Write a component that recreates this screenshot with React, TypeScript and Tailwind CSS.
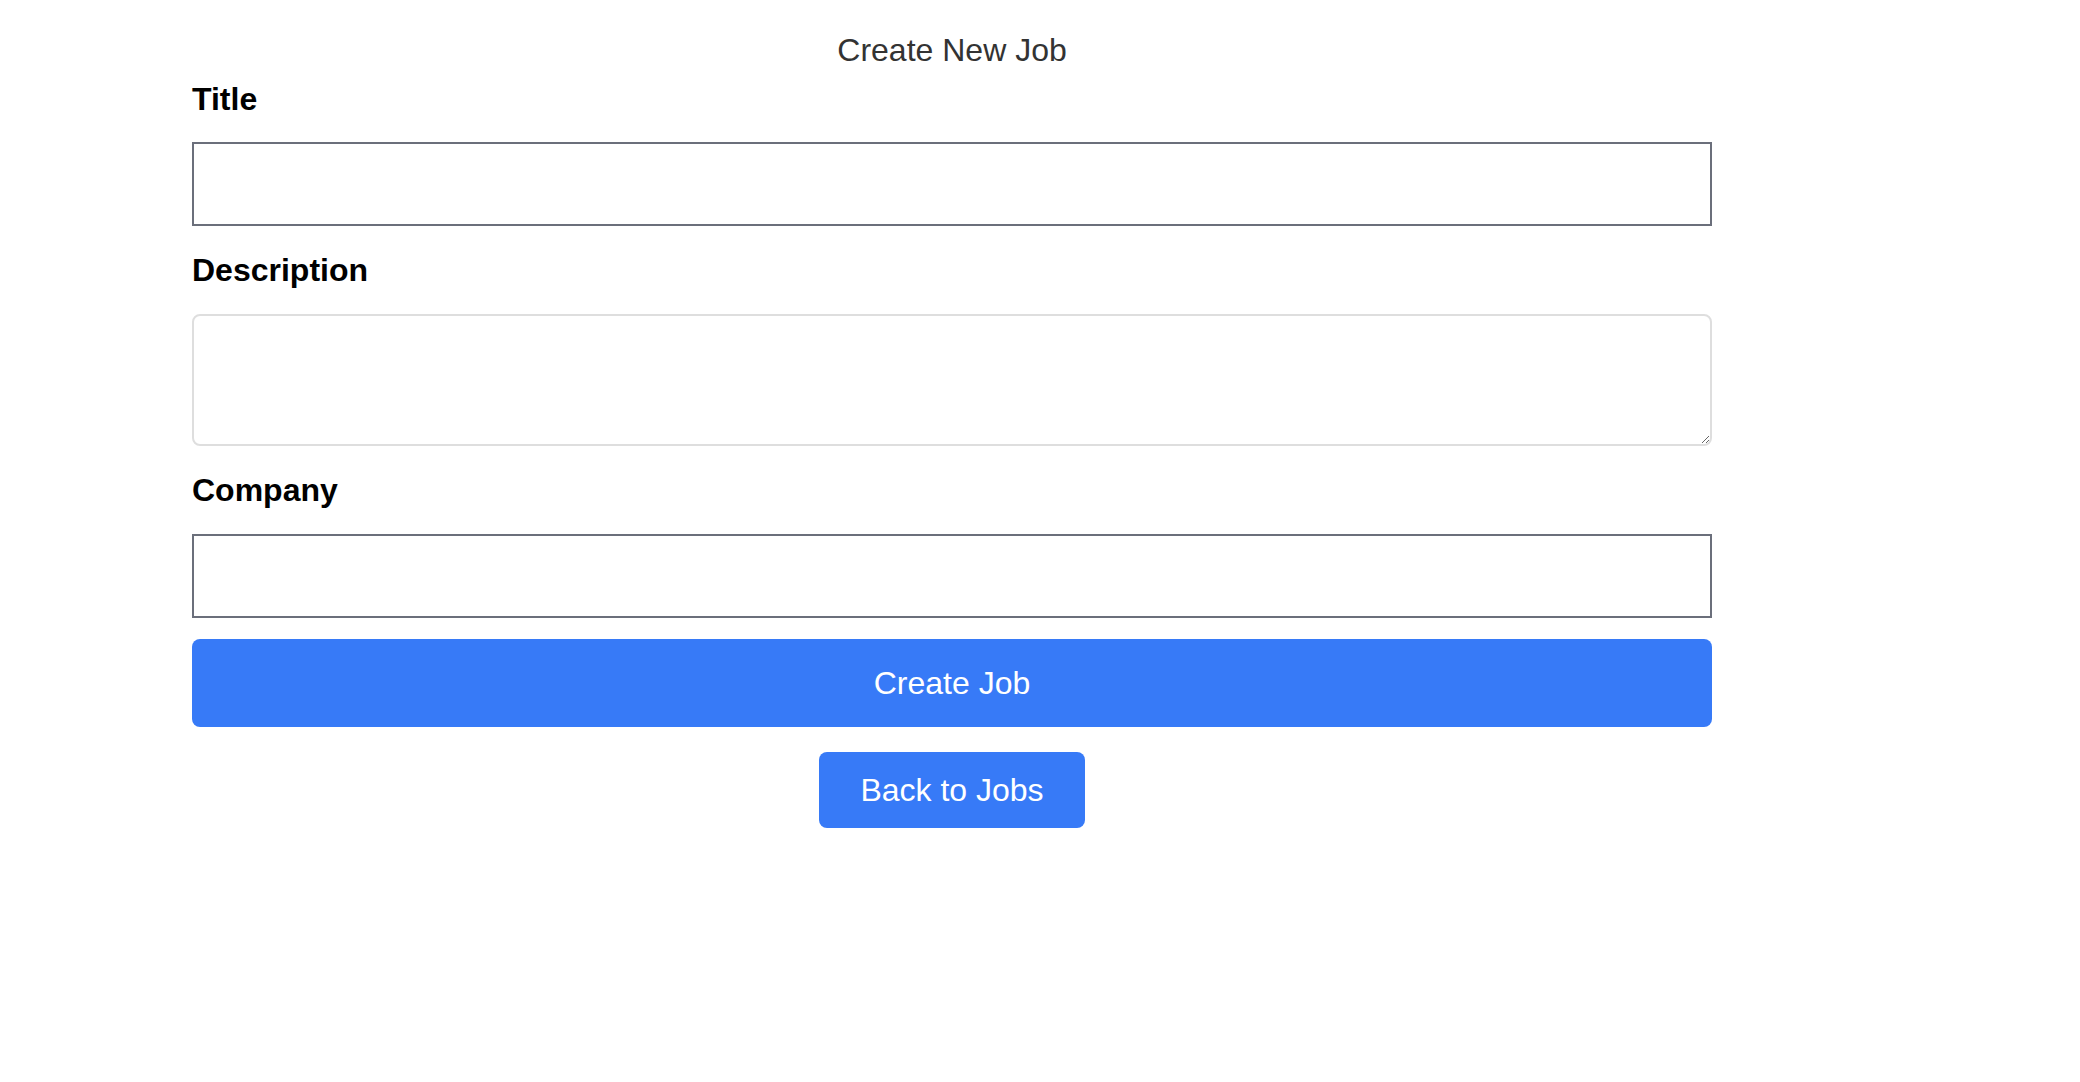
import React from "react";

export default function App() {
  return (
    <div className="min-h-screen bg-white" style={{ fontFamily: '"Liberation Sans", Arial, sans-serif' }}>
      <div className="ml-[192px] w-[1520px] flex flex-col">
        <h1 className="mt-[32px] text-center text-[32px] leading-[37px] font-normal text-[#333333]">Create New Job</h1>
        <label className="mt-[12px] text-[32px] leading-[37px] font-bold text-black">Title</label>
        <input
          type="text"
          className="mt-[24px] h-[84px] w-full border-2 border-[#6b6f7b] bg-white px-3 text-[32px] outline-none"
        />
        <label className="mt-[26px] text-[32px] leading-[37px] font-bold text-black">Description</label>
        <textarea className="mt-[25px] h-[132px] w-full rounded-[8px] border-2 border-[#dedede] bg-white p-3 text-[32px] outline-none" />
        <label className="mt-[26px] text-[32px] leading-[37px] font-bold text-black">Company</label>
        <input
          type="text"
          className="mt-[25px] h-[84px] w-full border-2 border-[#6b6f7b] bg-white px-3 text-[32px] outline-none"
        />
        <button className="mt-[21px] h-[88px] w-full rounded-[8px] bg-[#377af7] text-[32px] leading-[37px] text-white">
          Create Job
        </button>
        <div className="mt-[25px] flex justify-center">
          <button className="h-[76px] rounded-[8px] bg-[#377af7] px-[41px] text-[32px] leading-[36px] text-white">
            Back to Jobs
          </button>
        </div>
      </div>
    </div>
  );
}
